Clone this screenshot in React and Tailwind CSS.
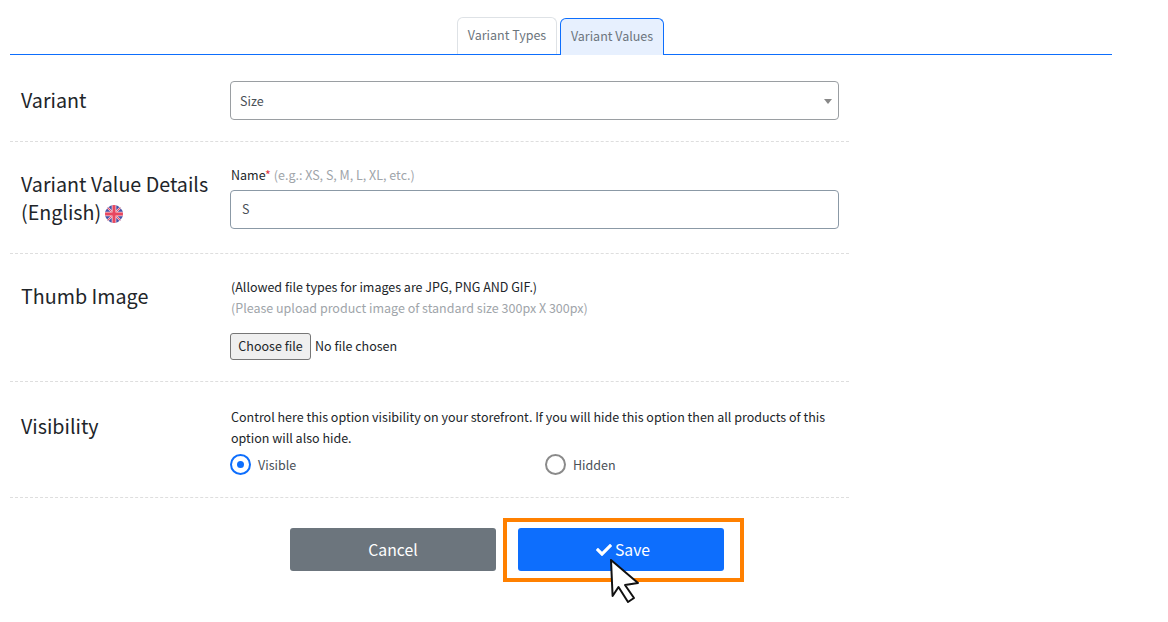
import React from "react";
import { FaCheck } from "react-icons/fa";

const font = "font-['Noto_Sans_CJK_JP','Noto_Sans',sans-serif]";

function Flag() {
  return (
    <svg width="18" height="18" viewBox="0 0 18 18" className="ml-[4px] inline-block align-[-3px]">
      <defs>
        <clipPath id="c"><circle cx="9" cy="9" r="9" /></clipPath>
      </defs>
      <g clipPath="url(#c)">
        <rect width="18" height="18" fill="#4452a8" />
        <path d="M0 0L18 18M18 0L0 18" stroke="#f0c3ce" strokeWidth="2.2" />
        <path d="M0 0L18 18M18 0L0 18" stroke="#e8506a" strokeWidth="1" />
        <path d="M9 0V18M0 9H18" stroke="#f5d8de" strokeWidth="4.6" />
        <path d="M9 0V18M0 9H18" stroke="#e8465f" strokeWidth="3" />
      </g>
    </svg>
  );
}

function Row({ label, labelClass, className, children }) {
  return (
    <div className={`flex border-b border-dashed border-[#dedede] pl-[11px] pr-[10px] ${className}`}>
      <div className={`w-[209px] shrink-0 text-[19.7px] leading-[28px] text-[#212529] ${labelClass}`}>{label}</div>
      <div className="w-[609px] shrink-0">{children}</div>
    </div>
  );
}

function Radio({ checked, label, className }) {
  return (
    <div className={`flex items-center gap-[7px] ${className}`}>
      {checked ? (
        <span className="flex h-[21px] w-[21px] items-center justify-center rounded-full border-2 border-[#0d6efd]">
          <span className="h-[7px] w-[7px] rounded-full bg-[#0d6efd]" />
        </span>
      ) : (
        <span className="h-[21px] w-[21px] rounded-full border-2 border-[#8a8a8a]" />
      )}
      <span className="text-[12.5px] leading-[21px] text-[#495057]">{label}</span>
    </div>
  );
}

export default function App() {
  return (
    <div className={`relative h-[622px] w-[1168px] overflow-hidden bg-white ${font}`}>
      <div className="ml-[10px] w-[1102px]">
        <div className="flex h-[55px] items-end justify-center gap-[3px] border-b border-[#0d6efd] pr-[1px]">
          <div className="flex h-[37px] w-[100px] items-center justify-center rounded-t-[6px] border border-b-0 border-[#dee2e6] pb-[2px] text-[12.5px] text-[#6c757d]">
            Variant Types
          </div>
          <div className="-mb-px flex h-[37px] w-[104px] items-center justify-center rounded-t-[6px] border border-b-0 border-[#0d6efd] bg-[#e7f0fe] pb-[2px] text-[12.5px] text-[#6c757d]">
            Variant Values
          </div>
        </div>

        <div className="w-[839px]">
          <Row label="Variant" labelClass="mt-[5px]" className="h-[87px] pt-[26px]">
            <div className="flex h-[39px] items-center justify-between rounded-[4px] border border-[#9a9ea2] pl-[9px] pr-[6px] pt-[1px] text-[12.5px] text-[#495057]">
              <span>Size</span>
              <span className="h-0 w-0 border-x-[4px] border-t-[5px] border-x-transparent border-t-[#888888]" />
            </div>
          </Row>

          <Row
            label={
              <>
                Variant Value Details
                <br />
                (English)
                <Flag />
              </>
            }
            labelClass="mt-[6px]"
            className="h-[112px] pt-[22px]"
          >
            <div className="h-[21px] pl-px text-[12.5px] leading-[21px] text-[#212529]">
              Name<span className="text-[#dc3545]">*</span>{" "}
              <span className="text-[#a0a5aa]">(e.g.: XS, S, M, L, XL, etc.)</span>
            </div>
            <div className="mt-[5px] flex h-[39px] items-center rounded-[4px] border border-[#8b99a6] pl-[11px] text-[12.5px] text-[#495057]">
              S
            </div>
          </Row>

          <Row label="Thumb Image" labelClass="mt-[6px]" className="h-[128px] pt-[22px]">
            <div className="pl-px text-[12.5px] leading-[21px] text-[#212529]">
              (Allowed file types for images are JPG, PNG AND GIF.)
            </div>
            <div className="pl-px text-[12.5px] leading-[21px] text-[#a0a5aa]">
              (Please upload product image of standard size 300px X 300px)
            </div>
            <div className="mt-[15px] flex items-center">
              <div className="flex h-[27px] w-[81px] items-center justify-center rounded-[3px] border border-[#767676] bg-[#efefef] text-[12.5px] text-[#212529]">
                Choose file
              </div>
              <span className="ml-[4px] text-[12.5px] text-[#212529]">No file chosen</span>
            </div>
          </Row>

          <Row label="Visibility" labelClass="mt-[6px]" className="h-[116px] pt-[24px]">
            <div className="pl-px text-[12.5px] leading-[21px] text-[#212529]">
              Control here this option visibility on your storefront. If you will hide this option then all products of this
              option will also hide.
            </div>
            <div className="mt-[6px] flex">
              <Radio checked label="Visible" className="w-[315px]" />
              <Radio label="Hidden" />
            </div>
          </Row>

          <div className="mt-[30px] flex gap-[22px] pl-[280px]">
            <div className="flex h-[43px] w-[206px] items-center justify-center rounded-[3px] bg-[#6c757d] text-[15.75px] text-white">
              Cancel
            </div>
            <div className="flex h-[43px] w-[206px] items-center justify-center gap-[3px] rounded-[3px] bg-[#0d6efd] pl-[4px] text-[15.75px] text-white">
              <FaCheck size={16} />
              Save
            </div>
          </div>
        </div>
      </div>

      <div className="absolute left-[503px] top-[518px] h-[64px] w-[241px] border-4 border-[#ff8000]" />
      <svg className="absolute left-[609px] top-[558px]" width="32" height="46" viewBox="0 0 32 46">
        <path d="M2 2L3.6 38L9.5 29L19 44L25 40L16 27L29 25Z" fill="white" stroke="#111" strokeWidth="2" strokeLinejoin="round" />
      </svg>
    </div>
  );
}
